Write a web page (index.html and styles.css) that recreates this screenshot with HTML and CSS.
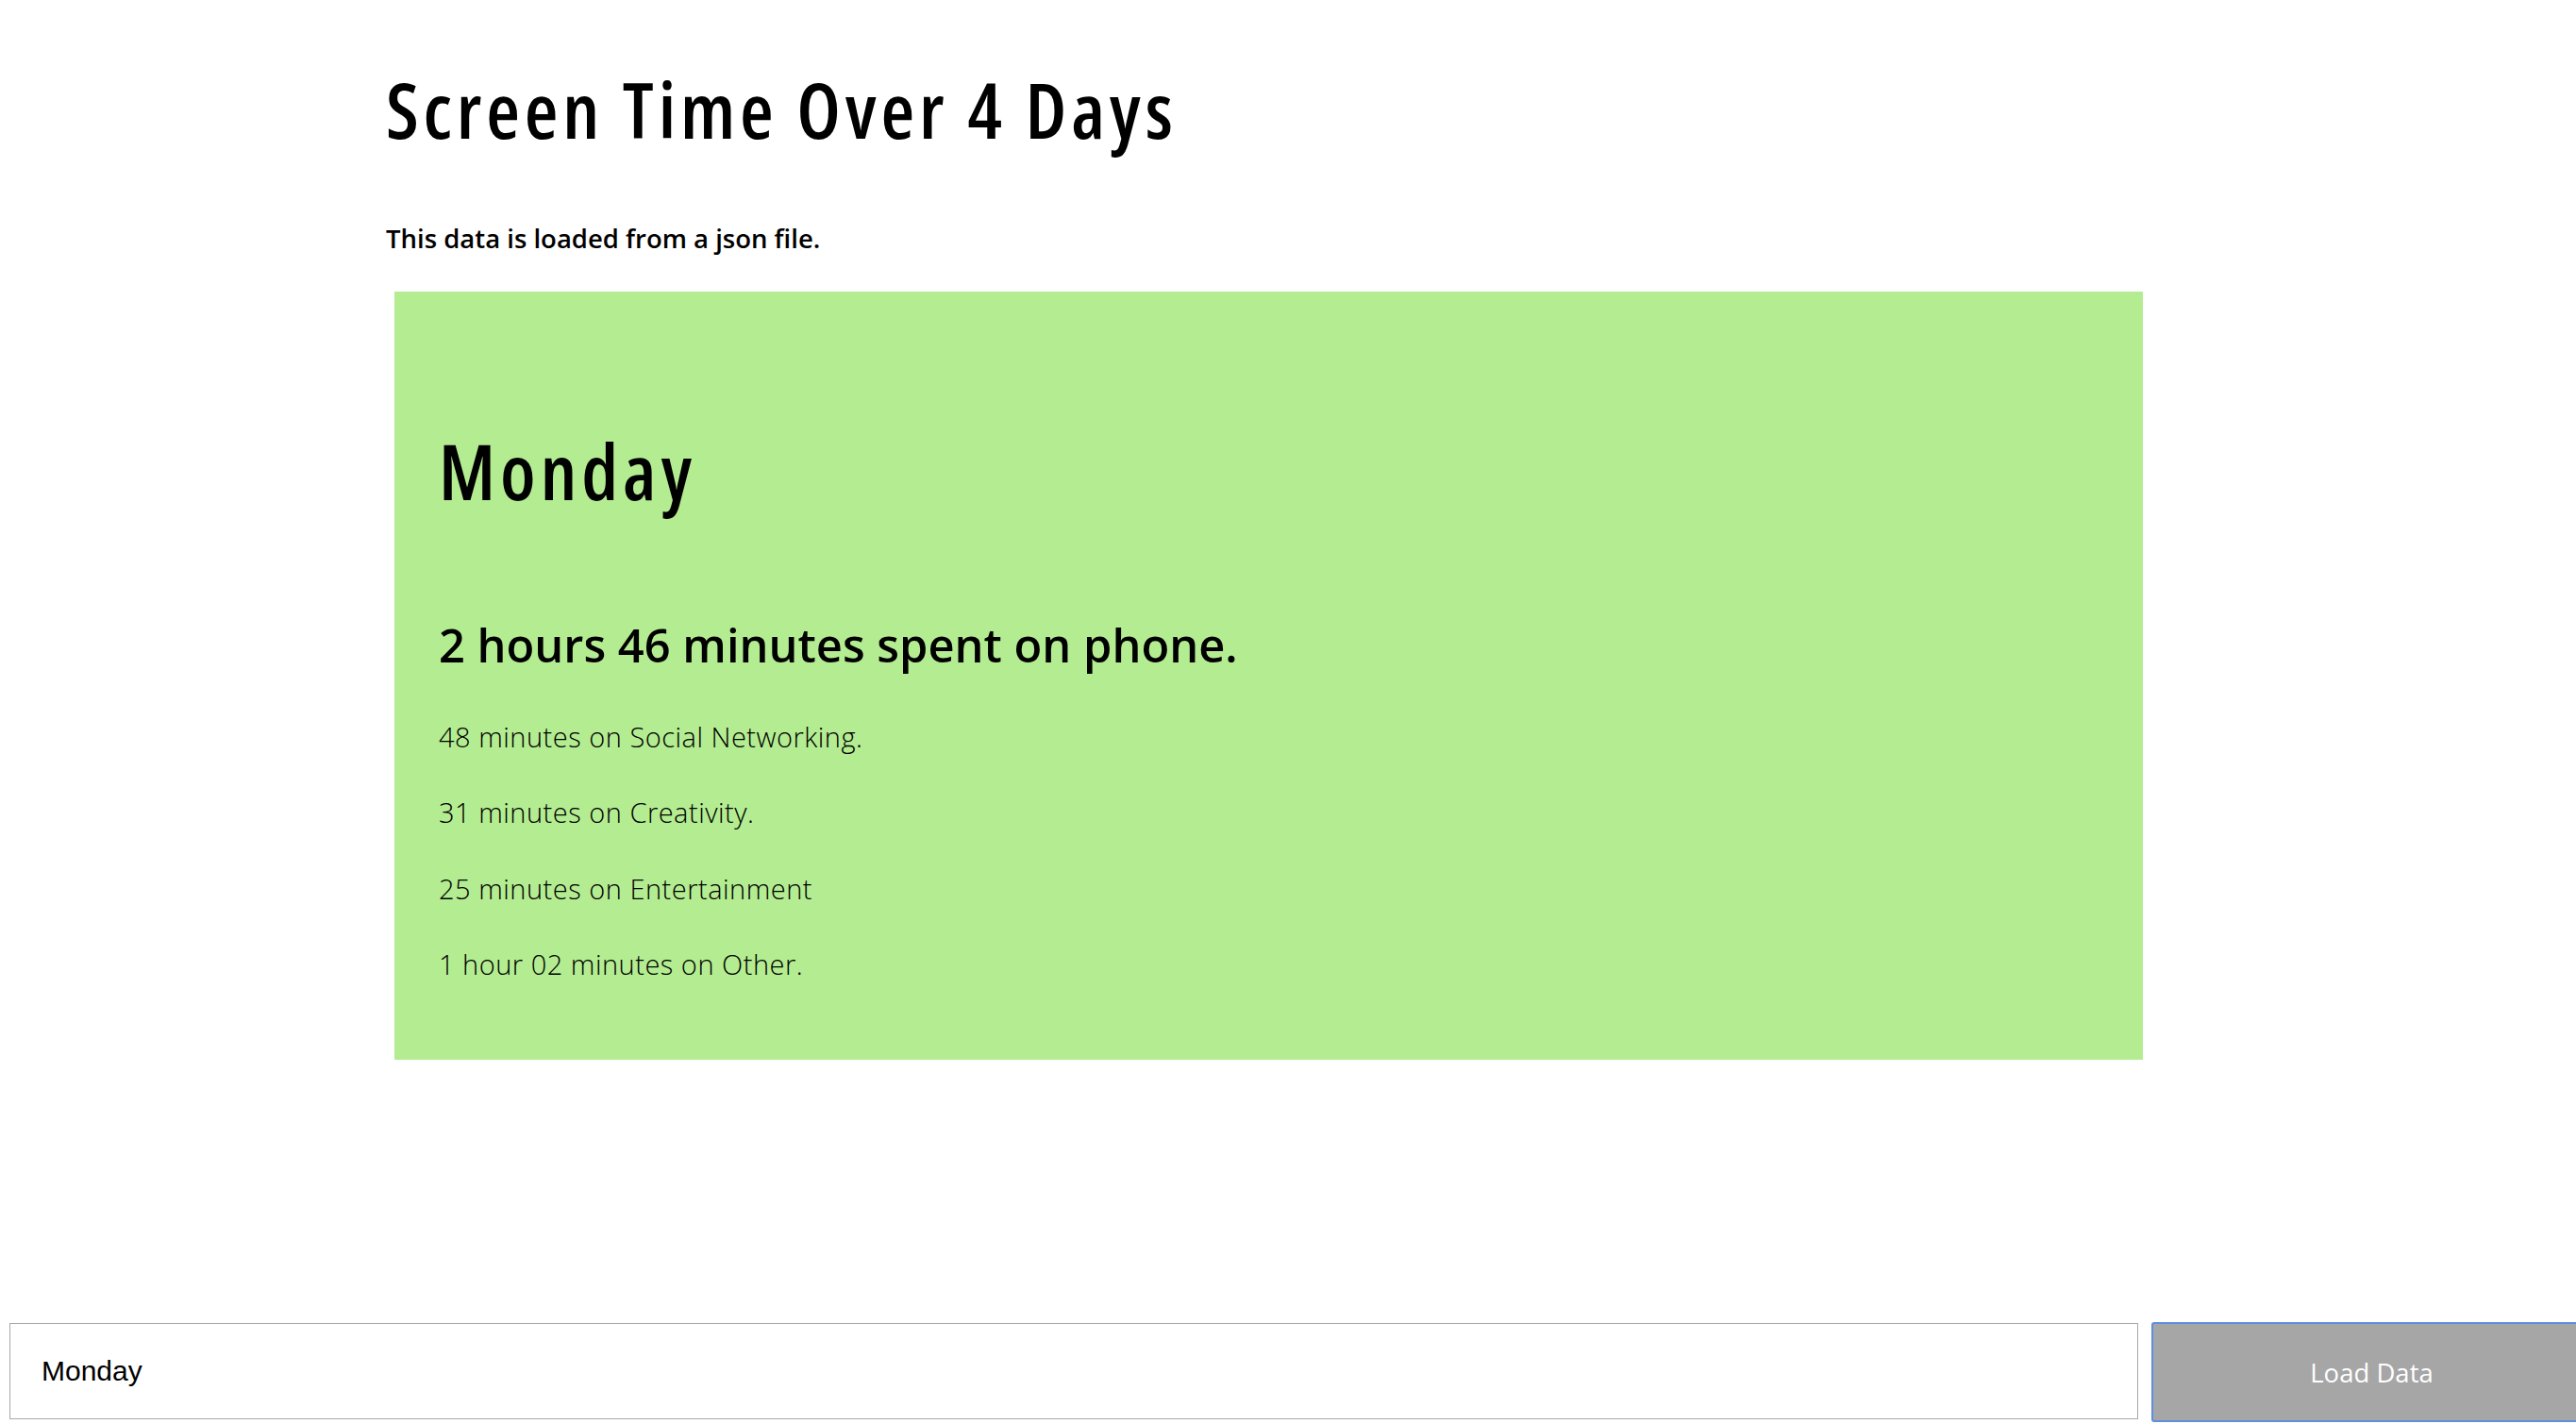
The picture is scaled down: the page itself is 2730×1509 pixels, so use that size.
FILE: index.html
```html
<!DOCTYPE html>
<html lang="en">
<head>
<meta charset="utf-8">
<title>Screen Time Over 4 Days</title>
<link rel="stylesheet" href="styles.css">
</head>
<body>
<main class="page">
  <h1 class="title">Screen Time Over 4 Days</h1>
  <p class="intro">This data is loaded from a json file.</p>
  <section class="card">
    <h1 class="day">Monday</h1>
    <h2 class="total">2 hours 46 minutes spent on phone.</h2>
    <p class="item">48 minutes on Social Networking.</p>
    <p class="item">31 minutes on Creativity.</p>
    <p class="item">25 minutes on Entertainment</p>
    <p class="item">1 hour 02 minutes on Other.</p>
  </section>
</main>
<form class="loader">
  <input class="day-input" type="text" value="Monday">
  <button class="load-btn" type="button">Load Data</button>
</form>
</body>
</html>
```
FILE: styles.css
```css
html, body {
  margin: 0;
  padding: 0;
  background: #ffffff;
  overflow: hidden;
}
body {
  color: #000;
  font-family: "Open Sans", "Liberation Sans", sans-serif;
}
.page {
  width: 1912px;
  margin: 0 0 0 409px;
  padding-top: 75px;
}
.title {
  margin: 0;
  font-family: "Open Sans", "Liberation Sans", sans-serif;
  font-weight: 600;
  font-size: 82px;
  line-height: 81px;
  font-stretch: 85%;
  letter-spacing: 4.8px;
}
.intro {
  margin: 77px 0 0;
  font-weight: 600;
  font-size: 27.5px;
  line-height: 40px;
}
.card {
  box-sizing: border-box;
  margin: 36px 0 0 9px;
  width: 1853px;
  height: 814px;
  padding: 149px 0 0 47px;
  background: #b4ed91;
}
.day {
  margin: 0;
  font-family: "Open Sans", "Liberation Sans", sans-serif;
  font-weight: 600;
  font-size: 81px;
  line-height: 81px;
  font-stretch: 85%;
  letter-spacing: 5px;
}
.total {
  margin: 114px 0 0;
  font-weight: 600;
  font-size: 48.8px;
  line-height: 60px;
}
.item {
  margin: 0;
  font-weight: 300;
  font-size: 29px;
  line-height: 40px;
  letter-spacing: 0.5px;
}
.total + .item {
  margin-top: 48px;
}
.item + .item {
  margin-top: 40.3px;
}
.loader {
  display: flex;
  align-items: flex-start;
  margin: 278px 0 0 10px;
  width: 2740px;
}
.day-input {
  box-sizing: border-box;
  flex: none;
  width: 2256px;
  height: 102px;
  margin: 1px 0 0;
  padding: 0 0 0 33px;
  border: 1px solid #a9a9a9;
  border-radius: 0;
  font-family: "Liberation Sans", Arial, sans-serif;
  font-size: 30px;
  color: #000;
  background: #fff;
  outline: none;
}
.load-btn {
  box-sizing: border-box;
  flex: none;
  width: 467px;
  height: 106px;
  margin-left: 14px;
  border: 2px solid #5f8fdc;
  border-radius: 3px;
  background: #a6a6a6;
  color: #ffffff;
  font-family: "Open Sans", sans-serif;
  font-size: 27.5px;
  font-weight: 400;
}
```
